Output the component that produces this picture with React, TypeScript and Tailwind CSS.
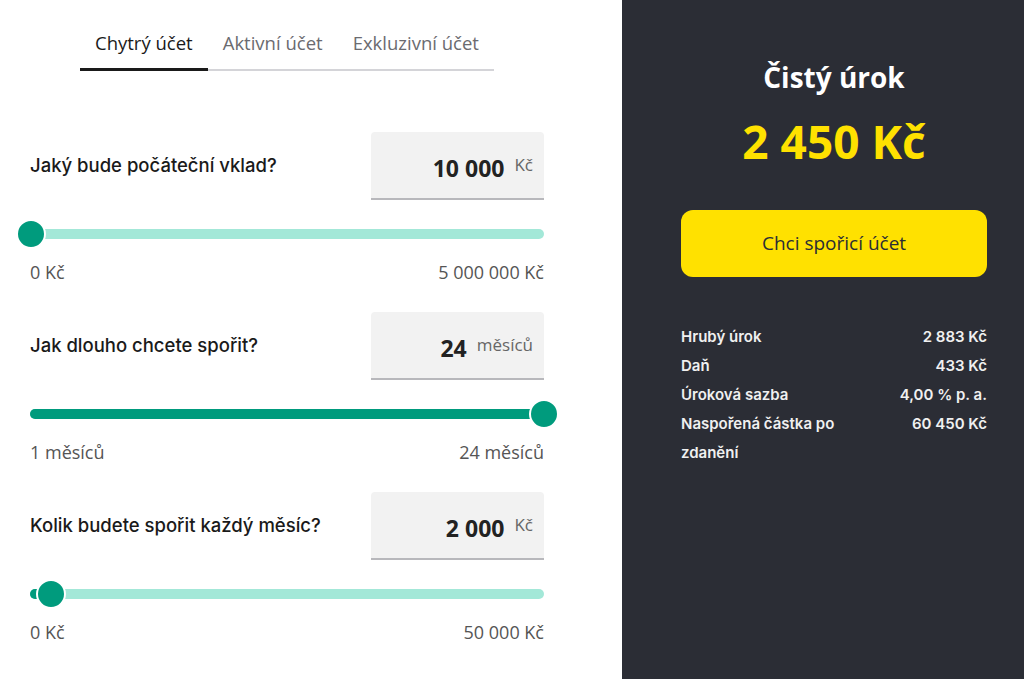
import React from "react";

const OPEN = { fontFamily: '"Open Sans", "Liberation Sans", sans-serif' };
const INTER = { fontFamily: 'Inter, "Noto Sans", sans-serif' };

function Slider({ frac }: { frac: number }) {
  const pos = 514 * frac;
  return (
    <div className="relative h-[30px] mt-[19px] w-[514px]">
      <div className="absolute left-0 right-0 top-[10px] h-[10px] rounded-full bg-[#a3e8d8]" />
      <div
        className="absolute left-0 top-[10px] h-[10px] rounded-full bg-[#009b7d]"
        style={{ width: pos }}
      />
      <div
        className="absolute top-0 h-[30px] w-[30px] -ml-[15px] rounded-full bg-[#009b7d] border-2 border-white"
        style={{ left: pos }}
      />
    </div>
  );
}

function Section({
  label,
  value,
  unit,
  frac,
  min,
  max,
  first,
}: {
  label: string;
  value: string;
  unit: string;
  frac: number;
  min: string;
  max: string;
  first?: boolean;
}) {
  return (
    <div className={first ? "flex flex-col" : "flex flex-col mt-[29px]"}>
      <div className="flex items-center justify-between">
        <div className="text-[18.5px] font-medium text-[#1a1a1a] whitespace-nowrap" style={INTER}>
          {label}
        </div>
        <div className="h-[68px] w-[173px] shrink-0 bg-[#f2f2f2] rounded-t-[4px] border-b-2 border-[#b8b8bc] flex items-center justify-end pr-[11px] gap-[10px]">
          <span className="text-[23px] font-bold text-[#222] mt-[6px]" style={OPEN}>
            {value}
          </span>
          <span className="text-[17px] text-[#666]" style={OPEN}>
            {unit}
          </span>
        </div>
      </div>
      <Slider frac={frac} />
      <div
        className="flex justify-between mt-[12px] text-[18px] leading-[22px] text-[#555]"
        style={OPEN}
      >
        <span>{min}</span>
        <span>{max}</span>
      </div>
    </div>
  );
}

export default function App() {
  const rows: [string, string][] = [
    ["Hrubý úrok", "2 883 Kč"],
    ["Daň", "433 Kč"],
    ["Úroková sazba", "4,00 % p. a."],
    ["Naspořená částka po zdanění", "60 450 Kč"],
  ];
  return (
    <div className="flex w-[1024px] h-[679px] overflow-hidden bg-white">
      <div className="w-[622px] shrink-0 pl-[30px] pr-[78px]">
        <div
          className="ml-[50px] w-[414px] mt-[31px] flex border-b-2 border-[#d4d4d8] text-[18.5px] leading-[24px] whitespace-nowrap"
          style={OPEN}
        >
          <div className="relative shrink-0 px-[15px] pb-[14px] text-[#1a1a1a]">
            Chytrý účet
            <div className="absolute left-0 right-0 -bottom-[2px] h-[3px] bg-[#1a1a1a]" />
          </div>
          <div className="shrink-0 px-[15px] pb-[14px] text-[#6b6b70]">Aktivní účet</div>
          <div className="shrink-0 px-[15px] pb-[14px] text-[#6b6b70]">Exkluzivní účet</div>
        </div>
        <div className="mt-[61px] w-[514px]">
          <Section
            first
            label="Jaký bude počáteční vklad?"
            value="10 000"
            unit="Kč"
            frac={10000 / 5000000}
            min="0 Kč"
            max="5 000 000 Kč"
          />
          <Section
            label="Jak dlouho chcete spořit?"
            value="24"
            unit="měsíců"
            frac={1}
            min="1 měsíců"
            max="24 měsíců"
          />
          <Section
            label="Kolik budete spořit každý měsíc?"
            value="2 000"
            unit="Kč"
            frac={2000 / 50000}
            min="0 Kč"
            max="50 000 Kč"
          />
        </div>
      </div>
      <div className="flex-1 bg-[#2b2d35] pl-[59px] pr-[37px] flex flex-col">
        <div className="mt-[59px] text-center text-white text-[28px] leading-[36px] font-bold" style={OPEN}>
          Čistý úrok
        </div>
        <div className="mt-[16px] text-center text-[#ffe100] text-[46px] leading-[60px] font-bold" style={OPEN}>
          2 450 Kč
        </div>
        <div
          className="mt-[39px] h-[67px] rounded-[12px] bg-[#ffe100] flex items-center justify-center text-[19px] text-[#2b2d35] font-medium"
          style={OPEN}
        >
          Chci spořicí účet
        </div>
        <div className="mt-[45px] flex flex-col text-[15px] leading-[29px] font-semibold text-[#f0f0f0]" style={INTER}>
          {rows.map(([l, v]) => (
            <div key={l} className="flex justify-between">
              <span className="w-[175px]">{l}</span>
              <span className="text-right">{v}</span>
            </div>
          ))}
        </div>
      </div>
    </div>
  );
}
